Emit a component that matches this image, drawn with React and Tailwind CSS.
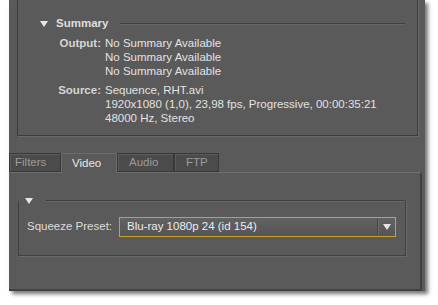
const font = { fontFamily: '"Liberation Sans", Arial, sans-serif' };

const Tri = ({ className = "" }) => (
  <svg width="8" height="6" viewBox="0 0 8 6" className={className}>
    <path d="M0 0 H8 L4 6 Z" fill="#e6e6e6" />
  </svg>
);

const tabs = ["Filters", "Video", "Audio", "FTP"];
const tabWidths = ["w-[52px]", "w-[56px]", "w-[57px]", "w-[45px]"];

export default function App() {
  return (
    <div className="w-[438px] h-[305px] bg-white overflow-hidden text-[11.5px]" style={font}>
      <div className="ml-[9px] w-[416px] h-[291px] bg-[#5a5a5a] shadow-[3px_3px_4px_rgba(0,0,0,0.55)] flex flex-col">
        {/* summary scroll area */}
        <div className="ml-[8px] w-[401px] h-[136px] border-l border-r border-b border-[#3c3c3c] shadow-[1px_1px_0_#6a6a6a] pt-[17px]">
          <div className="flex items-center h-[14px] pl-[22px] pr-[12px]">
            <Tri />
            <span className="ml-[8px] font-bold text-[#dedede]">Summary</span>
            <div className="flex-1 ml-[12px] h-[2px] border-t border-[#3f3f3f] border-b border-b-[#666]" />
          </div>
          <div className="grid grid-cols-[83px_1fr] gap-x-[4px] mt-[5px] leading-[14px] text-[#e2e2e2]">
            <span className="text-right font-bold text-[#d6d6d6]">Output:</span>
            <div className="flex flex-col">
              <span>No Summary Available</span>
              <span>No Summary Available</span>
              <span>No Summary Available</span>
            </div>
            <span className="text-right font-bold text-[#d6d6d6] mt-[5px]">Source:</span>
            <div className="flex flex-col mt-[5px]">
              <span>Sequence, RHT.avi</span>
              <span>1920x1080 (1,0), 23,98 fps, Progressive, 00:00:35:21</span>
              <span>48000 Hz, Stereo</span>
            </div>
          </div>
        </div>

        {/* tabs */}
        <div className="flex mt-[17px] h-[19px]">
          {tabs.map((t, i) => (
            <div
              key={t}
              className={
                t === "Video"
                  ? `${tabWidths[i]} h-[20px] bg-[#5a5a5a] border-t border-l border-r border-[#6c6c6c] text-[#e8e8e8] pl-[10px] flex items-center z-10`
                  : `${tabWidths[i]} h-[19px] bg-[#4b4b4b] border border-[#383838] shadow-[inset_1px_1px_0_#5c5c5c] text-[#9c9c9c] pl-[5px] flex items-center`
              }
            >
              {t === "Filters" ? <span>{t}</span> : <span className={t === "Video" ? "" : "pl-[6px]"}>{t}</span>}
            </div>
          ))}
        </div>

        {/* tab content */}
        <div className="flex-1 border-t border-[#6e6e6e] border-r-2 border-r-[#404040] border-b-2 border-b-[#404040] mr-[3px] pt-[28px]">
          <div className="ml-[9px] w-[388px] h-[55px] border-l border-r border-b border-[#404040] shadow-[1px_1px_0_#6a6a6a] flex flex-col">
            <div className="flex items-center h-[8px] -mt-[4px]">
              <Tri className="ml-[6px]" />
              <div className="flex-1 ml-[13px] h-[2px] border-t border-[#404040] border-b border-b-[#676767]" />
            </div>
            <div className="flex items-center mt-[12px] pl-[8px]">
              <span className="w-[92px] text-[#dcdcdc]">Squeeze Preset:</span>
              <div className="w-[277px] h-[20px] border border-[#c9a12c] bg-gradient-to-b from-[#626262] to-[#555] flex items-center">
                <span className="flex-1 pl-[7px] text-[#ececec]">Blu-ray 1080p 24 (id 154)</span>
                <div className="w-[18px] h-[16px] border-l border-[#454545] shadow-[inset_1px_0_0_#6b6b6b] flex items-center justify-center">
                  <Tri />
                </div>
              </div>
            </div>
          </div>
        </div>
      </div>
    </div>
  );
}
